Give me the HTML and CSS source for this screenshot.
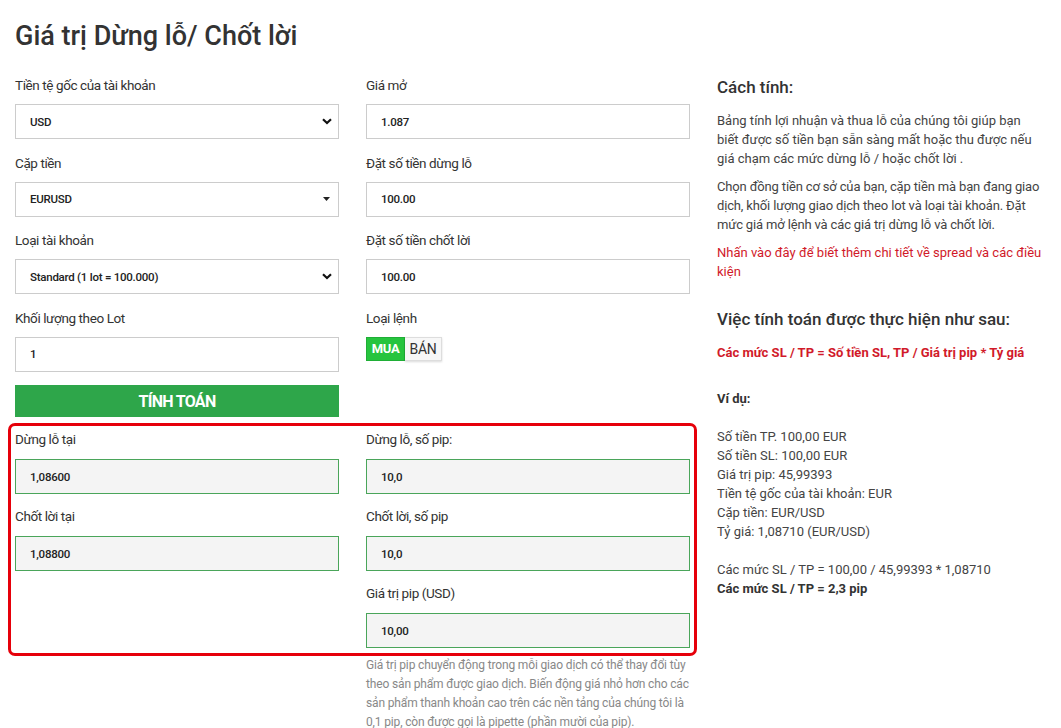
FILE: index.html
```html
<!DOCTYPE html>
<html lang="vi">
<head>
    <meta charset="UTF-8">
    <meta name="viewport" content="width=device-width, initial-scale=1.0">
    <title>Giá trị Dừng lỗ/ Chốt lời</title>
    <link rel="stylesheet" href="styles.css">
</head>
<body>
    <div class="page">
        <h1>Giá trị Dừng lỗ/ Chốt lời</h1>

        <div class="layout">
            <div class="calc">
                <div class="columns">
                    <div class="col">
                        <div class="field">
                            <label>Tiền tệ gốc của tài khoản</label>
                            <div class="select">
                                <span>USD</span>
                                <svg class="chevron" width="10" height="7" viewBox="0 0 10 7"><path d="M1 1.2 L5 5 L9 1.2" fill="none" stroke="#111" stroke-width="2.2"/></svg>
                            </div>
                        </div>
                        <div class="field">
                            <label>Cặp tiền</label>
                            <div class="select">
                                <span>EURUSD</span>
                                <svg class="caret" width="7" height="4" viewBox="0 0 7 4"><path d="M0 0 H7 L3.5 4 Z" fill="#222"/></svg>
                            </div>
                        </div>
                        <div class="field">
                            <label>Loại tài khoản</label>
                            <div class="select">
                                <span>Standard (1 lot = 100.000)</span>
                                <svg class="chevron" width="10" height="7" viewBox="0 0 10 7"><path d="M1 1.2 L5 5 L9 1.2" fill="none" stroke="#111" stroke-width="2.2"/></svg>
                            </div>
                        </div>
                        <div class="field">
                            <label>Khối lượng theo Lot</label>
                            <input class="input" type="text" value="1">
                        </div>
                        <button class="btn-calc">TÍNH TOÁN</button>
                    </div>

                    <div class="col">
                        <div class="field">
                            <label>Giá mở</label>
                            <input class="input" type="text" value="1.087">
                        </div>
                        <div class="field">
                            <label>Đặt số tiền dừng lỗ</label>
                            <input class="input" type="text" value="100.00">
                        </div>
                        <div class="field">
                            <label>Đặt số tiền chốt lời</label>
                            <input class="input" type="text" value="100.00">
                        </div>
                        <div class="field">
                            <label>Loại lệnh</label>
                            <div class="toggle">
                                <span class="opt active">MUA</span>
                                <span class="opt">BÁN</span>
                            </div>
                        </div>
                    </div>
                </div>

                <!-- ket qua tinh toan -->
                <div class="result">
                    <div class="col">
                        <div class="field">
                            <label>Dừng lỗ tại</label>
                            <input class="input out" type="text" value="1,08600" readonly>
                        </div>
                        <div class="field">
                            <label>Chốt lời tại</label>
                            <input class="input out" type="text" value="1,08800" readonly>
                        </div>
                    </div>
                    <div class="col">
                        <div class="field">
                            <label>Dừng lỗ, số pip:</label>
                            <input class="input out" type="text" value="10,0" readonly>
                        </div>
                        <div class="field">
                            <label>Chốt lời, số pip</label>
                            <input class="input out" type="text" value="10,0" readonly>
                        </div>
                        <div class="field">
                            <label>Giá trị pip (USD)</label>
                            <input class="input out" type="text" value="10,00" readonly>
                        </div>
                    </div>
                </div>

                <div class="columns">
                    <div class="col"></div>
                    <p class="note">Giá trị pip chuyển động trong mỗi giao dịch có thể thay đổi tùy theo sản phẩm được giao dịch. Biến động giá nhỏ hơn cho các sản phẩm thanh khoản cao trên các nền tảng của chúng tôi là 0,1 pip, còn được gọi là pipette (phần mười của pip).</p>
                </div>
            </div>

            <aside class="info">
                <h2>Cách tính:</h2>
                <p>Bảng tính lợi nhuận và thua lỗ của chúng tôi giúp bạn biết được số tiền bạn sẵn sàng mất hoặc thu được nếu giá chạm các mức dừng lỗ / hoặc chốt lời .</p>
                <p class="tight">Chọn đồng tiền cơ sở của bạn, cặp tiền mà bạn đang giao dịch, khối lượng giao dịch theo lot và loại tài khoản. Đặt mức giá mở lệnh và các giá trị dừng lỗ và chốt lời.</p>
                <p><a href="#" class="link">Nhấn vào đây để biết thêm chi tiết về spread và các điều kiện</a></p>

                <h3>Việc tính toán được thực hiện như sau:</h3>
                <p class="formula">Các mức SL / TP = Số tiền SL, TP / Giá trị pip * Tỷ giá</p>

                <p class="example"><strong>Ví dụ:</strong><br>
                    <br>
                    Số tiền TP. 100,00 EUR<br>
                    Số tiền SL: 100,00 EUR<br>
                    Giá trị pip: 45,99393<br>
                    Tiền tệ gốc của tài khoản: EUR<br>
                    Cặp tiền: EUR/USD<br>
                    Tỷ giá: 1,08710 (EUR/USD)<br>
                    <br>
                    Các mức SL / TP = 100,00 / 45,99393 * 1,08710<br>
                    <strong>Các mức SL / TP = 2,3 pip</strong>
                </p>
            </aside>
        </div>
    </div>
</body>
</html>
```

FILE: styles.css
```css
body {
    margin: 0;
    font-family: Roboto, "Noto Sans", Arial, sans-serif;
    color: #333;
    background: #fff;
}
.page {
    padding: 16px 15px 0 15px;
}
h1 {
    margin: 0;
    font-size: 27px;
    font-weight: 500;
    line-height: 40px;
    color: #333;
}
.layout {
    display: flex;
    gap: 27px;
    margin-top: 19px;
}
.calc {
    width: 675px;
}
.columns {
    display: grid;
    grid-template-columns: 324px 324px;
    column-gap: 27px;
}
.col {
    display: flex;
    flex-direction: column;
}
.field {
    margin-bottom: 13.5px;
}
.field label {
    display: block;
    font-size: 13.5px;
    letter-spacing: -0.4px;
    line-height: 20px;
    margin-bottom: 9px;
    color: #333;
}
.input,
.select {
    box-sizing: border-box;
    width: 100%;
    height: 35px;
    border: 1px solid #ccc;
    background: #fff;
    padding: 0 14px;
    font-family: Roboto, Arial, sans-serif;
    font-size: 11.5px;
    letter-spacing: -0.25px;
    font-weight: 500;
    color: #222;
    outline: none;
}
.select {
    display: flex;
    align-items: center;
    justify-content: space-between;
    padding-right: 6px;
}
.select .caret {
    margin-right: 2px;
}
.btn-calc {
    height: 32px;
    border: none;
    background: #2ea64a;
    color: #fff;
    font-family: Roboto, Arial, sans-serif;
    font-size: 16px;
    font-weight: 700;
    letter-spacing: -0.7px;
    cursor: pointer;
}
.toggle {
    display: flex;
    height: 24px;
}
.opt {
    display: flex;
    align-items: center;
    justify-content: center;
    box-sizing: border-box;
    height: 24px;
    font-size: 14px;
    letter-spacing: -0.3px;
}
.opt.active {
    width: 39px;
    background: #26c43e;
    color: #fff;
    font-size: 13px;
    font-weight: 700;
    border: 1px solid #1fae36;
}
.opt:not(.active) {
    width: 37px;
    background: #f7f7f7;
    color: #333;
    border: 1px solid #ddd;
    border-left: none;
    box-shadow: 0 1px 2px rgba(0,0,0,0.15);
}

/* khung ket qua */
.result {
    display: grid;
    grid-template-columns: 324px 324px;
    column-gap: 27px;
    margin: 6px -7px 0 -7px;
    padding: 3px 4px 0 4px;
    border: 3px solid #e6000a;
    border-radius: 7px;
}
.result .field {
    margin-bottom: 12px;
}
.result .field label {
    margin-bottom: 10px;
}
.result .col:last-child .field:last-child {
    margin-bottom: 5px;
}
.input.out {
    background: #f4f4f4;
    border-color: #4aa55a;
}
.note {
    margin: 0;
    font-size: 12px;
    letter-spacing: -0.15px;
    line-height: 19px;
    color: #888;
}

/* cot ben phai */
.info {
    width: 326px;
    font-size: 13px;
    line-height: 19px;
    color: #444;
}
.info h2 {
    margin: 0;
    font-size: 17px;
    font-weight: 500;
    line-height: 24px;
    color: #333;
}
.info p {
    margin: 0 0 9px 0;
}
.info p.tight {
    letter-spacing: -0.15px;
}
.info h2 + p {
    margin-top: 12px;
}
.link {
    color: #d11a2a;
    text-decoration: none;
}
.info h3 {
    margin: 26px 0 0 0;
    font-size: 17px;
    font-weight: 500;
    line-height: 24px;
    color: #333;
}
.formula {
    margin: 12px 0 0 0 !important;
    color: #d11a2a;
    font-weight: 700;
}
.example {
    margin-top: 27px !important;
}
.example strong {
    color: #333;
}
```
